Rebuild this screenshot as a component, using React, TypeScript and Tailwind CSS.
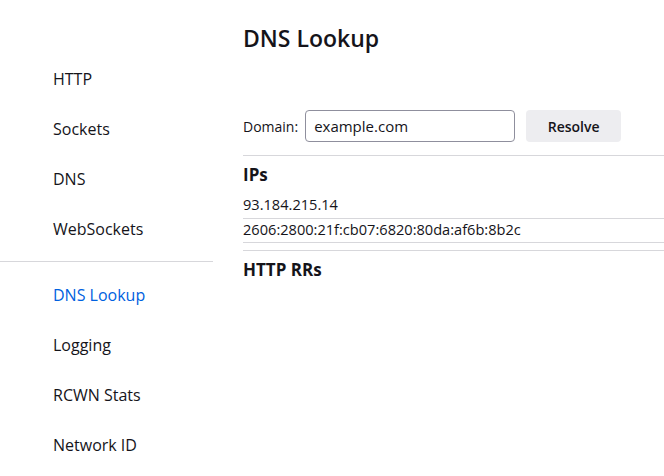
import React from 'react'

const top = ['HTTP', 'Sockets', 'DNS', 'WebSockets']
const bottom = ['DNS Lookup', 'Logging', 'RCWN Stats', 'Network ID']

function NavItem({ label, active }: { label: string; active?: boolean }) {
    return (
        <div className={`h-[50px] flex items-center pl-[53px] text-[16px] ${active ? 'text-[#0061e0]' : 'text-[#15141a]'}`}>
            {label}
        </div>
    )
}

export default function App() {
    return (
        <div className="flex w-[664px] h-[476px] bg-white overflow-hidden text-[#15141a]" style={{ fontFamily: '"Open Sans", "Noto Sans", sans-serif' }}>
            <div className="w-[213px] shrink-0 pt-[54px]">
                {top.map(t => <NavItem key={t} label={t} />)}
                <div className="mt-[7px] mb-[8px] border-t border-[#d7d7db]"></div>
                {bottom.map(t => <NavItem key={t} label={t} active={t === 'DNS Lookup'} />)}
            </div>

            <div className="flex-1 pl-[30px]">
                <div className="h-[76px] flex items-center">
                    <h1 className="text-[23px] font-semibold">DNS Lookup</h1>
                </div>
                <div className="h-[34px]"></div>
                <div className="h-[32px] flex items-center text-[14px]">
                    <span>Domain:</span>
                    <div className="ml-[7px] w-[210px] h-[32px] border border-[#8f8f9d] rounded-[4px] flex items-center px-[8px] text-[15px]">
                        example.com
                    </div>
                    <button className="ml-[11px] w-[95px] h-[32px] bg-[#ededf0] rounded-[4px] font-semibold text-[14px]">
                        Resolve
                    </button>
                </div>
                <div className="mt-[13px] border-t border-[#d7d7db]"></div>
                <div className="h-[36px] pt-[1px] flex items-center">
                    <h2 className="text-[17px] font-bold">IPs</h2>
                </div>
                <div className="text-[14.6px]">
                    <div className="h-[27px] pb-[1px] flex items-center border-b border-[#d7d7db]">93.184.215.14</div>
                    <div className="h-[24px] pb-[2px] flex items-center border-b border-[#d7d7db]">2606:2800:21f:cb07:6820:80da:af6b:8b2c</div>
                </div>
                <div className="mt-[7px] border-t border-[#d7d7db]"></div>
                <div className="h-[38px] flex items-center">
                    <h2 className="text-[17px] font-bold">HTTP RRs</h2>
                </div>
            </div>
        </div>
    )
}
